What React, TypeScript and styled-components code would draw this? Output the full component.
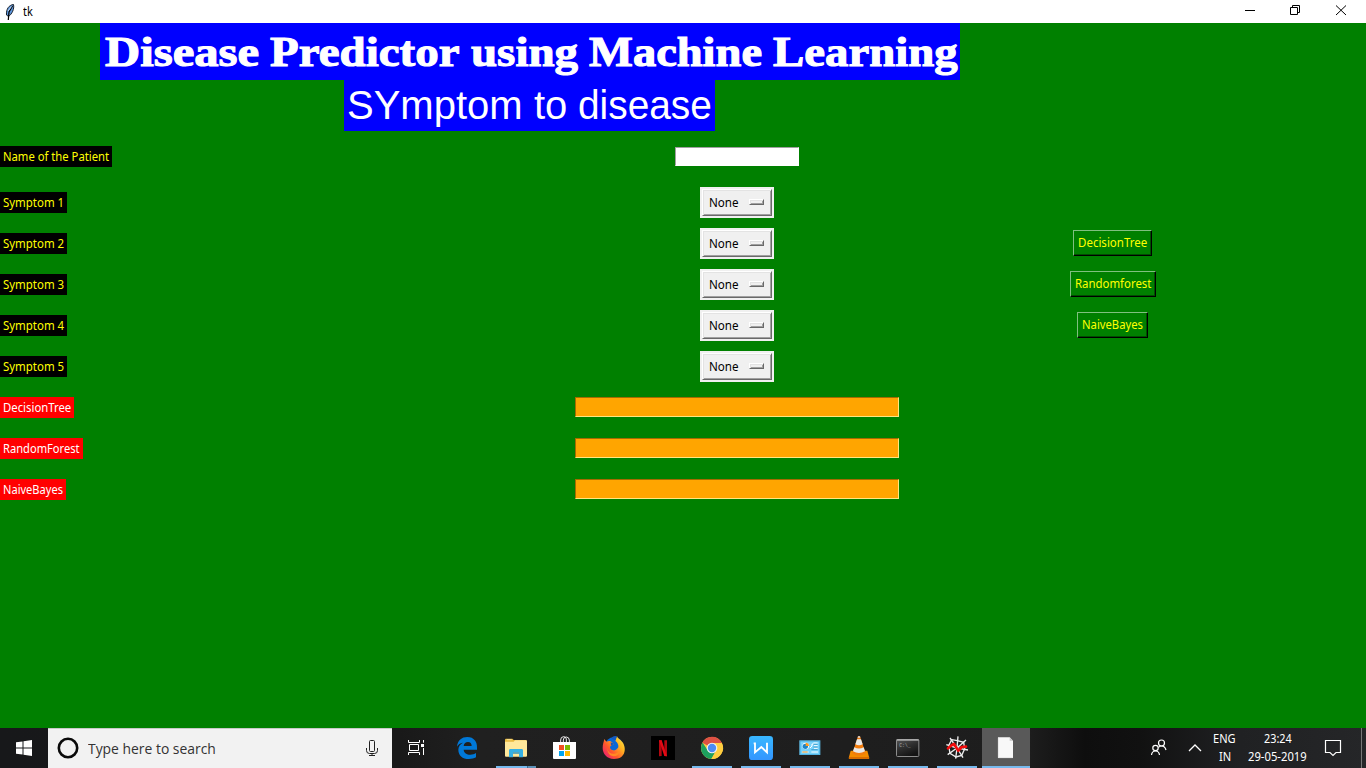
import React, { useLayoutEffect, useRef, useState } from "react";
import styled, { createGlobalStyle, css } from "styled-components";

const GlobalStyle = createGlobalStyle`
  * { box-sizing: border-box; }
  html, body { margin: 0; padding: 0; height: 768px; overflow: hidden; }
  body { font-family: "Noto Sans", "Open Sans", sans-serif; font-size: 12px; }
`;

const Screen = styled.div`
  display: flex;
  flex-direction: column;
  width: 1366px;
  height: 768px;
  background: #008000;
`;

/* ---------- text fitted to a fixed advance width ---------- */

const FitBox = styled.span<{ $w: number }>`
  display: inline-block;
  flex: none;
  width: ${(p) => p.$w}px;
  white-space: nowrap;
`;
const FitInner = styled.span`
  display: inline-block;
  transform-origin: 0 50%;
`;

function Fit({ w, children }: { w: number; children: string }) {
  const ref = useRef<HTMLSpanElement>(null);
  const [scale, setScale] = useState(1);
  useLayoutEffect(() => {
    if (ref.current) setScale(w / ref.current.offsetWidth);
  }, [w, children]);
  return (
    <FitBox $w={w}>
      <FitInner ref={ref} style={{ transform: `scaleX(${scale})` }}>
        {children}
      </FitInner>
    </FitBox>
  );
}

/* ---------- window title bar ---------- */

const TitleBar = styled.header`
  display: flex;
  flex: none;
  align-items: center;
  height: 23px;
  background: #fff;
  color: #000;
`;
const Feather = styled.svg`
  width: 12px;
  height: 18px;
  margin: 0 7px 0 4px;
`;
const WindowName = styled.span`
  flex: 1;
  line-height: 22px;
`;
const WindowButton = styled.svg`
  width: 46px;
  height: 23px;
  flex: none;
  fill: none;
  stroke: #000;
`;

/* ---------- form ---------- */

const Headings = styled.div`
  display: flex;
  flex: none;
  flex-direction: column;
  align-items: center;
  width: 1060px;
  color: #fff;
`;
const Title = styled.h1`
  display: flex;
  gap: 11px;
  margin: 0;
  width: 860px;
  height: 57px;
  padding-left: 5px;
  background: #0000ff;
  font: bold 43px/57px "Liberation Serif", serif;
  -webkit-text-stroke: 1.1px #fff;
`;
const Subtitle = styled.h2`
  display: flex;
  gap: 11px;
  margin: 0 1px 0 0;
  width: 371px;
  height: 51px;
  padding-left: 3px;
  background: #0000ff;
  font: normal 40px/51px "Liberation Sans", sans-serif;
`;
const Form = styled.main`
  flex: 1;
`;
const Row = styled.div<{ $tall?: boolean }>`
  display: grid;
  grid-template-columns: 530px 414px 337px;
  align-items: center;
  height: ${(p) => (p.$tall ? 51 : 41)}px;
`;
const Label = styled.label<{ $w: number; $result?: boolean }>`
  width: ${(p) => p.$w}px;
  height: 21px;
  padding-left: 3px;
  line-height: 22px;
  background: ${(p) => (p.$result ? "#ff0000" : "#000")};
  color: ${(p) => (p.$result ? "#fff" : "#ffff00")};
`;
const NameEntry = styled.div`
  justify-self: center;
  width: 124px;
  height: 19px;
  background: #fff;
  border: 1px solid;
  border-color: #a0a0a0 #fff #fff #a0a0a0;
`;
const Output = styled.div`
  justify-self: center;
  width: 324px;
  height: 20px;
  margin-bottom: 1px;
  background: #ffa500;
  border: 1px solid;
  border-color: #a66b00 #ffe680 #ffe680 #a66b00;
`;
const raised = css`
  border: 1px solid;
  border-color: #fff #696969 #696969 #fff;
  box-shadow: inset 1px 1px #e3e3e3, inset -1px -1px #a0a0a0;
`;
const OptionFrame = styled.div`
  justify-self: center;
  width: 74px;
  height: 31px;
  padding: 2px;
  background: #f0f0f0;
`;
const OptionFace = styled.div`
  display: flex;
  align-items: center;
  justify-content: space-between;
  height: 27px;
  padding: 0 7px 0 6px;
  line-height: 20px;
  ${raised}
`;
const Indicator = styled.i`
  width: 15px;
  height: 6px;
  margin-bottom: 1px;
  background: #f0f0f0;
  ${raised}
`;
const ModelButton = styled.div<{ $w: number }>`
  justify-self: center;
  width: ${(p) => p.$w}px;
  height: 26px;
  margin-bottom: 1px;
  padding-left: 4px;
  line-height: 23px;
  color: #ffff00;
  border: 1px solid;
  border-color: #80c080 #000 #000 #80c080;
  box-shadow: inset -1px -1px #004d00;
`;

/* ---------- taskbar ---------- */

const Taskbar = styled.footer`
  display: flex;
  flex: none;
  height: 40px;
  background: linear-gradient(90deg, #17181a 0, #191919 400px, #202020 480px, #1d1d1d 1030px, #0e0e0e 1085px, #111 1140px, #202123 1240px, #252628 1366px);
  color: #fff;
`;
const Start = styled.svg`
  width: 48px;
  height: 40px;
  flex: none;
`;
const Search = styled.div`
  display: flex;
  flex: none;
  align-items: center;
  width: 344px;
  background: #f2f2f2;
  border-top: 1px solid #c8cbc8;
  color: #333;
  font-size: 14px;
  padding-right: 12px;
  svg { flex: none; }
`;
const SearchText = styled.span`
  flex: 1;
  font-family: "Open Sans", sans-serif;
`;
const Apps = styled.nav`
  display: flex;
  gap: 1px;
`;
const TaskButton = styled.div<{ $active?: boolean; $first?: boolean; $open?: boolean; $group?: boolean }>`
  display: flex;
  flex-direction: column;
  justify-content: flex-end;
  align-items: center;
  width: 48px;
  height: 40px;
  margin-right: ${(p) => (p.$first ? 2 : 0)}px;
  background: ${(p) => (p.$active ? "#595959" : "transparent")};
  svg { display: block; width: 48px; height: 38px; }
  &::after {
    content: "";
    width: ${(p) => (p.$active ? 48 : 40)}px;
    height: 2px;
    background: ${(p) =>
      !p.$open ? "transparent" : p.$group ? "linear-gradient(90deg, #76b9ed 31px, #3e6a8c 31px, #3e6a8c 32px, #5c91b8 32px)" : "#76b9ed"};
  }
`;
const Tray = styled.div`
  display: flex;
  flex: 1;
  justify-content: flex-end;
`;
const TrayIcon = styled.svg<{ $w: number }>`
  width: ${(p) => p.$w}px;
  height: 40px;
  flex: none;
  fill: none;
  stroke: #fff;
`;
const TrayText = styled.div<{ $w: number }>`
  display: flex;
  flex-direction: column;
  align-items: center;
  flex: none;
  width: ${(p) => p.$w}px;
  padding: 2px 0 0 0;
  line-height: 18px;
`;
const ShowDesktop = styled.div`
  width: 5px;
  flex: none;
  border-left: 1px solid #777;
`;

const TaskIcon = ({ children }: { children: React.ReactNode }) => (
  <svg viewBox="0 0 144 114">{children}</svg>
);

const TaskView = () => (
  <TaskIcon>
    <g fill="none" stroke="#fff" strokeWidth="3">
      <path d="M49.500 36v7.500h33V36M49.500 81v-7.500h33V81M52.500 49.500h27v18h-27z" />
      <path d="M94.500 36v8M94.500 60v21" />
    </g>
    <path d="M87 48h9v9h-9z" fill="#fff" />
  </TaskIcon>
);
const Edge = () => (
  <TaskIcon>
    <path
      d="M42 56C44 37 56 27 73 27c20 0 30 15 29 32v6H62c1 10 9 15 20 15 7 0 12-2 17-5v13c-6 3-13 5-21 5-20 0-32-11-32-28 0-10 6-17 14-21-9 1-14 5-18 12zM62 54h24c0-8-4-12-11-12-7 0-12 4-13 12z"
      fill="#0078d7"
      fillRule="evenodd"
    />
  </TaskIcon>
);
const Explorer = () => (
  <TaskIcon>
    <path d="M39 35q0-3 3-3h19l4 4h36q3 0 3 3v6H39z" fill="#e8b93c" />
    <path d="M44 35h15" stroke="#fff3c4" strokeWidth="2" />
    <path d="M39 41h26l4-4h33q3 0 3 3v43q0 3-3 3H42q-3 0-3-3z" fill="#ffe89b" />
    <path d="M51 86V67q0-4 4-4h34q4 0 4 4v19q0 2-2 2H81V73H63v15H53q-2 0-2-2z" fill="#35b0e4" />
    <path d="M63 73h18v4H63z" fill="#1e89bd" />
  </TaskIcon>
);
const Store = () => (
  <TaskIcon>
    <path d="M59 43V36q0-10 9-10 7 0 8 7v10M67 43V36q0-9 9-9 8 0 9 9v7" fill="none" stroke="#e8e8e8" strokeWidth="3" />
    <path d="M36 42h69v48q0 3-3 3H39q-3 0-3-3z" fill="#fff" />
    <path d="M54 51h15v15H54z" fill="#f25022" />
    <path d="M72 51h15v15H72z" fill="#7fba00" />
    <path d="M54 69h15v15H54z" fill="#00a4ef" />
    <path d="M72 69h15v15H72z" fill="#ffb900" />
  </TaskIcon>
);
const Firefox = () => (
  <TaskIcon>
    <defs>
      <linearGradient id="fx" x1="1" y1="0" x2="0" y2="0.9">
        <stop offset="0" stopColor="#fff04a" />
        <stop offset="0.35" stopColor="#ffb321" />
        <stop offset="0.65" stopColor="#ff5a2b" />
        <stop offset="1" stopColor="#e8147b" />
      </linearGradient>
    </defs>
    <circle cx="72" cy="54" r="27" fill="#0968d8" />
    <path
      d="M43 33c2 3 4 6 7 8 3-2 8-3 12-1l10 8-10 6c-4 3-1 12 8 13 7 1 12-4 15-9 1-8-3-14-8-18-2-5 2-12 4-15 2 7 10 10 16 17 13 17 11 51-25 51-22 0-34-16-34-33 0-11 3-18 5-27z"
      fill="url(#fx)"
    />
    <path d="M62 43l11 4-10 6zM67 27q7-5 14-2l-4 12-12-5z" fill="#1559bd" />
    <path d="M51 59q3 18 20 18 13 0 18-12-1 19-19 20-17-3-19-26z" fill="#ff8a22" />
  </TaskIcon>
);
const Netflix = () => (
  <TaskIcon>
    <path d="M36 24h72v72H36z" fill="#000" />
    <path d="M60 37h8v47l-8 1zM76 37h8v48l-8-1z" fill="#b20710" />
    <path d="M60 37h8l16 48-8-1z" fill="#e50914" />
  </TaskIcon>
);
const Chrome = () => (
  <TaskIcon>
    <circle cx="72" cy="60" r="33" fill="#ffcd40" />
    <path d="M72 60L43 44a33 33 0 0 1 58-0.500V45H72z" fill="#dd5144" />
    <path d="M43.500 43.500A33 33 0 0 0 70 93L85 67 59 67z" fill="#1da05e" />
    <path d="M72 45h29.500A33 33 0 0 1 70 93l15-26z" fill="#ffcd40" />
    <circle cx="72" cy="60" r="16" fill="#f1f1f1" />
    <circle cx="72" cy="60" r="12.500" fill="#4c8bf5" />
  </TaskIcon>
);
const Wps = () => (
  <TaskIcon>
    <defs>
      <linearGradient id="wps" x2="0" y2="1">
        <stop stopColor="#38b7ff" />
        <stop offset="1" stopColor="#3396ff" />
      </linearGradient>
    </defs>
    <rect x="36" y="24" width="72" height="72" rx="10" fill="url(#wps)" />
    <path d="M50 46h4v27L73 57l17 16V44" fill="none" stroke="#fff" strokeWidth="5.500" />
  </TaskIcon>
);
const ControlPanel = () => (
  <TaskIcon>
    <path d="M40 37h63v44H40z" fill="#63c4f1" />
    <path d="M42 39h59v40H42z" fill="#2c96d2" />
    <path d="M43 40h57v38H43z" fill="#79d2fa" />
    <circle cx="59" cy="54" r="10" fill="#fff" />
    <circle cx="58" cy="55" r="8" fill="#1b84c9" />
    <path d="M59 54V44a10 10 0 0 1 10 10z" fill="#ff9b21" />
    <path d="M72 60l6-6v-6h5M82 45h13M84 53h11M84 61h11" stroke="#fff" strokeWidth="3" fill="none" />
    <path d="M82 49h13M82 57h13M76 65h19" stroke="#2187bd" strokeWidth="2" />
    <path d="M48 72h20M76 72h20" stroke="#fff" strokeWidth="3" />
    <path d="M49 72h16" stroke="#ff9b21" strokeWidth="3" />
  </TaskIcon>
);
const Vlc = () => (
  <TaskIcon>
    <path d="M47 68h50l6 22q0 3-3 3H44q-3 0-3-3z" fill="#f48b00" />
    <path d="M42 87h60v6H42z" fill="#d96c00" />
    <path d="M69 25h6l17 51q-20 13-40 0z" fill="#f27c0d" />
    <path d="M66 34h12l5 15q-11 6-22 0zM58 58q14 7 28 0l4 12q-18 10-36 0z" fill="#e9e9e9" />
    <path d="M69 25h6l1 4h-8z" fill="#ddd" />
  </TaskIcon>
);
const Terminal = () => (
  <TaskIcon>
    <defs>
      <linearGradient id="cmd" x2="0.500" y2="1">
        <stop stopColor="#555" />
        <stop offset="0.500" stopColor="#303030" />
        <stop offset="1" stopColor="#141414" />
      </linearGradient>
    </defs>
    <rect x="37.500" y="34.500" width="67" height="51" rx="3" fill="url(#cmd)" stroke="#8e8e8e" strokeWidth="3" />
    <path d="M38 36h66" stroke="#b6b6b6" strokeWidth="4" />
    <text x="46" y="58" fontSize="14" fill="#aaa" fontFamily="Liberation Mono, monospace">C:\_</text>
  </TaskIcon>
);
const Spyder = () => (
  <TaskIcon>
    <g fill="none" stroke="#eee" strokeWidth="4">
      <path d="M72 60L75 25M72 60L99 36M72 60L105 66M72 60L90 89M72 60L68 92M72 60L44 80M72 60L40 50M72 60L51 30" />
      <path d="M56 35l17 3 19 5 3 20-9 19-17 5-18-11-4-23z" />
    </g>
    <path d="M45 61l9-8 9-5 13 20 10-11 13-1" fill="none" stroke="#f30c0c" strokeWidth="8" strokeLinejoin="round" strokeLinecap="round" />
  </TaskIcon>
);
const Document = () => (
  <TaskIcon>
    <path d="M48 28h35l10 10v52H48z" fill="#f8f8f8" />
    <path d="M83 28v10h10z" fill="#c5c5c5" />
    <path d="M49 29v60h43" fill="none" stroke="#ddd" strokeWidth="2" />
  </TaskIcon>
);

const apps = [
  { Icon: TaskView, first: true },
  { Icon: Edge },
  { Icon: Explorer, open: true, group: true },
  { Icon: Store },
  { Icon: Firefox },
  { Icon: Netflix },
  { Icon: Chrome, open: true },
  { Icon: Wps, open: true },
  { Icon: ControlPanel, open: true },
  { Icon: Vlc, open: true },
  { Icon: Terminal, open: true },
  { Icon: Spyder, open: true },
  { Icon: Document, open: true, active: true },
];

const models: Record<number, { name: string; w: number }> = {
  2: { name: "DecisionTree", w: 79 },
  3: { name: "Randomforest", w: 86 },
  4: { name: "NaiveBayes", w: 71 },
};

const results = [
  { name: "DecisionTree", w: 74 },
  { name: "RandomForest", w: 83 },
  { name: "NaiveBayes", w: 66 },
];

export default function App() {
  return (
    <Screen>
      <GlobalStyle />
      <TitleBar>
        <Feather viewBox="0 0 12 18">
          <path d="M9.500 1.500C5 2 2 6 2.500 12l2 1.500C8 11 10.500 6 9.500 1.500z" fill="#5e96dc" stroke="#18202b" />
          <path d="M8.500 3L5 9l-.7 8" fill="none" stroke="#000" strokeWidth="1.200" />
          <path d="M7.500 3.500L4 8" stroke="#c5defa" />
        </Feather>
        <WindowName>
          <Fit w={10}>tk</Fit>
        </WindowName>
        <WindowButton viewBox="0 0 46 23">
          <path d="M17 10.500h10" />
        </WindowButton>
        <WindowButton viewBox="0 0 46 23">
          <path d="M16.500 7.500h7v7h-7zM18.500 7V5.500h7v7H24" />
        </WindowButton>
        <WindowButton viewBox="0 0 46 23">
          <path d="M16 5.500l10 9.500M26 5.500L16 15" />
        </WindowButton>
      </TitleBar>

      <Headings>
        <Title>
          <Fit w={154}>Disease</Fit>
          <Fit w={190}>Predictor</Fit>
          <Fit w={107}>using</Fit>
          <Fit w={173}>Machine</Fit>
          <Fit w={185}>Learning</Fit>
        </Title>
        <Subtitle>
          <Fit w={176}>SYmptom</Fit>
          <Fit w={33}>to</Fit>
          <Fit w={134}>disease</Fit>
        </Subtitle>
      </Headings>

      <Form>
        <Row $tall>
          <Label $w={112}>
            <Fit w={106}>Name of the Patient</Fit>
          </Label>
          <NameEntry />
        </Row>
        {[1, 2, 3, 4, 5].map((n) => (
          <Row key={n}>
            <Label $w={67}>
              <Fit w={61}>{`Symptom ${n}`}</Fit>
            </Label>
            <OptionFrame>
              <OptionFace>
                <Fit w={30}>None</Fit>
                <Indicator />
              </OptionFace>
            </OptionFrame>
            {models[n] && (
              <ModelButton $w={models[n].w}>
                <Fit w={models[n].w - 10}>{models[n].name}</Fit>
              </ModelButton>
            )}
          </Row>
        ))}
        {results.map((r) => (
          <Row key={r.name}>
            <Label $w={r.w} $result>
              <Fit w={r.w - 6}>{r.name}</Fit>
            </Label>
            <Output />
          </Row>
        ))}
      </Form>

      <Taskbar>
        <Start viewBox="0 0 48 40">
          <path d="M16 14.300l6.500-.9v6.100H16zM23.500 13.200l8.500-1.200v7.500h-8.500zM16 20.500h6.500v6.100l-6.500-.9zM23.500 20.500H32V28l-8.500-1.200z" fill="#fff" />
        </Start>
        <Search>
          <svg width="40" height="39" viewBox="0 0 40 39">
            <circle cx="20" cy="19" r="9.200" fill="none" stroke="#0a0a0a" strokeWidth="2.600" />
          </svg>
          <SearchText>
            <Fit w={128}>Type here to search</Fit>
          </SearchText>
          <svg width="16" height="39" viewBox="0 0 16 39" fill="none" stroke="#222">
            <rect x="5.500" y="11.500" width="5" height="11" rx="1" />
            <path d="M2.500 19v2.500q0 3 3 3h5q3 0 3-3V19M8 24.500v2M5 26.500h6" />
          </svg>
        </Search>
        <Apps>
          {apps.map(({ Icon, first, open, group, active }, i) => (
            <TaskButton key={i} $first={first} $open={open} $group={group} $active={active}>
              <Icon />
            </TaskButton>
          ))}
        </Apps>
        <Tray>
          <TrayIcon $w={36} viewBox="0 0 36 40" strokeWidth="1.200">
            <circle cx="20.500" cy="15" r="3" />
            <circle cx="14.500" cy="20" r="2.700" />
            <path d="M10.500 27q.5-4 4-4t4 4M17.500 19.500q1-1.500 3-1.500 3.500 0 4.500 4" />
          </TrayIcon>
          <TrayIcon $w={34} viewBox="0 0 34 40" strokeWidth="1.300">
            <path d="M12 23l6-6 6 6" />
          </TrayIcon>
          <TrayText $w={27}>
            <Fit w={23}>ENG</Fit>
            <Fit w={12}>IN</Fit>
          </TrayText>
          <TrayText $w={79}>
            <Fit w={28}>23:24</Fit>
            <Fit w={59}>29-05-2019</Fit>
          </TrayText>
          <TrayIcon $w={44} viewBox="0 0 44 40" strokeWidth="1.200">
            <path d="M8.500 12.500h15v12H19l-3 3-3-3H8.500z" />
          </TrayIcon>
          <ShowDesktop />
        </Tray>
      </Taskbar>
    </Screen>
  );
}
